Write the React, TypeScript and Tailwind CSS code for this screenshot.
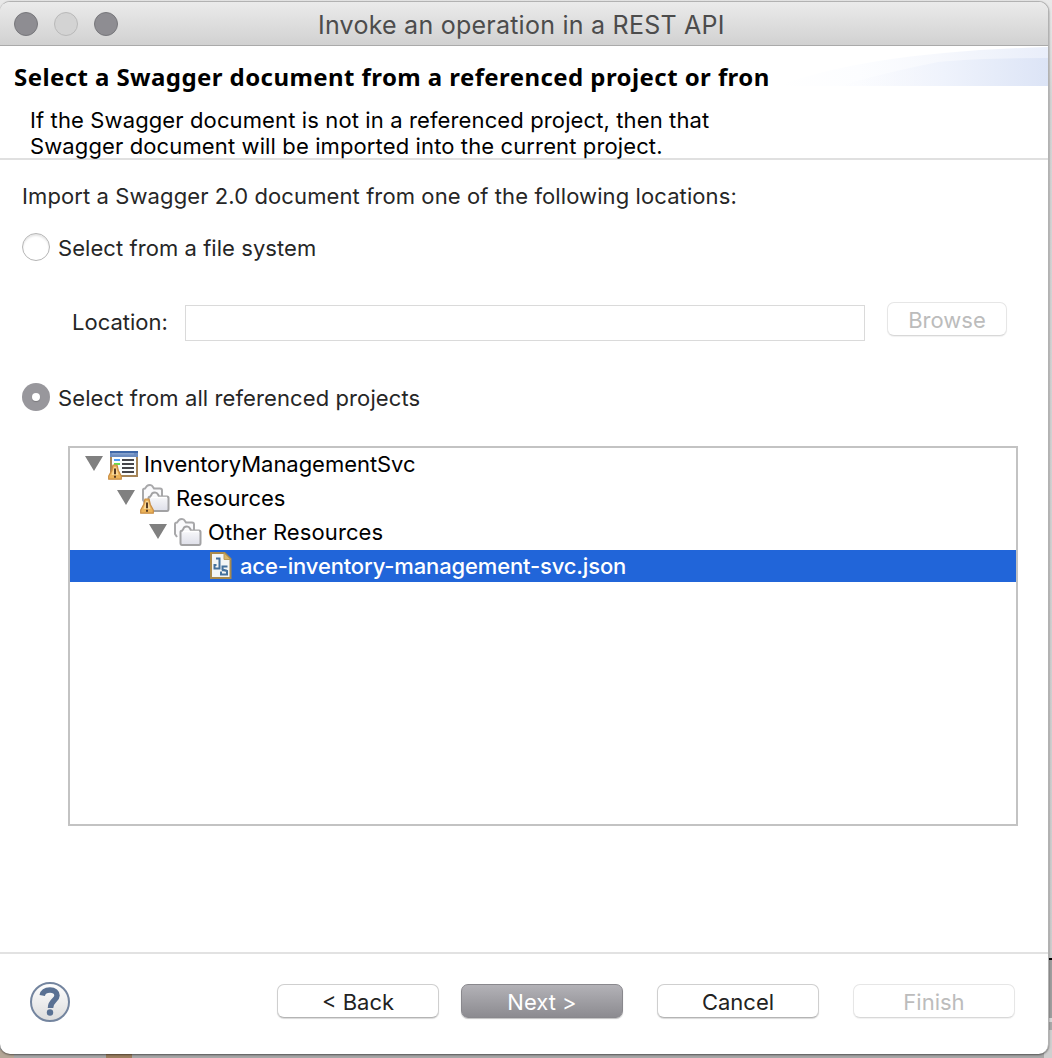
import type { ReactNode } from "react";

function Warning({ className }: { className: string }) {
  return (
    <svg className={className} viewBox="0 0 14 16" width="14" height="16">
      <path d="M5 1 H9 L10.300 6.500 L13.300 12 V15.200 H0.700 V12 L3.700 6.500 Z" fill="#ecb45a" stroke="#c98d43" strokeWidth="1.2" strokeLinejoin="round" />
      <path d="M3.500 11 L6 3 H8 L10.500 11 Z" fill="#f8d795" />
      <path d="M6 4.500 H8 V10.300 H6 Z M6 11.700 H8 V13.700 H6 Z" fill="#553a22" />
    </svg>
  );
}

function ProjectIcon() {
  return (
    <span className="relative block h-8 w-8">
      <svg width="32" height="32" viewBox="0 0 32 32">
        <rect x="3" y="3" width="26" height="24" fill="#fff" stroke="#a58457" strokeWidth="2" />
        <rect x="2" y="2" width="28" height="6" fill="#6c8cbf" />
        <rect x="2" y="2" width="28" height="2" fill="#3f68a8" />
        <rect x="4" y="4" width="22" height="1.500" fill="#86a2cd" />
        <rect x="4" y="8" width="24" height="18" fill="#fbfdfe" />
        <path d="M6 11 H12" stroke="#4b9cf5" strokeWidth="2" />
        <path d="M6 15 H12" stroke="#62e04f" strokeWidth="2" />
        <path d="M14 11 H26 M14 15 H26 M14 19 H26 M14 23 H26" stroke="#45454a" strokeWidth="2" />
      </svg>
      <Warning className="absolute left-0 top-[15px]" />
    </span>
  );
}

function FoldersIcon({ warning = false }: { warning?: boolean }) {
  return (
    <span className="relative block h-8 w-8">
      <svg width="32" height="32" viewBox="0 0 32 32">
        <defs>
          <linearGradient id="folder" x1="0" y1="0" x2="0" y2="1">
            <stop offset="0" stopColor="#ffffff" />
            <stop offset="1" stopColor="#dedfe9" />
          </linearGradient>
        </defs>
        <path d="M5 20 L3 17 V7 Q3 5.500 5 5.500 L7 3 Q8 2 10 2 Q12 2 13 4 L14 5.500 H20 Q22 5.500 22 7.500 V13" fill="#fafafc" stroke="#a8a8aa" strokeWidth="2" />
        <path d="M8.500 26 V15 Q8.500 13.500 10.500 13.500 L12 10.500 Q13 9.500 15 9.500 Q17 9.500 18 11.500 L19 13.500 H27 Q28.500 13.500 28.500 15 V26 Q28.500 28 27 28 H10 Q8.500 28 8.500 26 Z" fill="url(#folder)" stroke="#a2a2a4" strokeWidth="2" />
        <path d="M11 14.500 H27" stroke="#fff" strokeWidth="1.500" />
      </svg>
      {warning && <Warning className="absolute left-0 top-[15px]" />}
    </span>
  );
}

function JsonFileIcon() {
  return (
    <svg className="-mt-[2px]" width="24" height="30" viewBox="0 0 24 30">
      <path d="M2 3 H15.500 L21.500 9 V28 H2 Z" fill="#f3f6f6" stroke="#a98a4c" strokeWidth="2" />
      <path d="M15 3 V9.500 H21.500 Z" fill="#d9b768" stroke="#b99a58" strokeWidth="1" />
      <path d="M7 8.500 H10.500 V18.500 H5.500 V15 H7.500" fill="none" stroke="#44719c" strokeWidth="2" />
      <path d="M18.500 16.500 H13.500 V19.500 L18 21 V24.500 H12 V21.500" fill="none" stroke="#44719c" strokeWidth="2" />
      <path d="M13 20.500 H18" stroke="#44719c" strokeWidth="1.500" />
    </svg>
  );
}

function HelpIcon() {
  return (
    <svg width="42" height="42" viewBox="0 0 42 42">
      <defs>
        <linearGradient id="help" x1="0" y1="0" x2="0" y2="1">
          <stop offset="0" stopColor="#fff" />
          <stop offset="1" stopColor="#dcdcdc" />
        </linearGradient>
      </defs>
      <circle cx="21" cy="21" r="19" fill="url(#help)" stroke="#74859f" strokeWidth="2" />
      <path d="M13.200 14.500 C14 10.500 17 9 21 9 C25.500 9 28 11.500 28 14.500 C28 19.500 21.500 19.500 21.500 27" fill="none" stroke="#5a7193" strokeWidth="5.500" />
      <circle cx="21" cy="31.500" r="3.200" fill="#5a7193" />
    </svg>
  );
}

function HeaderSwoosh() {
  return (
    <svg className="absolute right-0 top-0" width="290" height="40" viewBox="0 0 290 40">
      <defs>
        <linearGradient id="outer" x1="0" y1="0" x2="1" y2="0">
          <stop offset="0" stopColor="#fff" />
          <stop offset=".3" stopColor="#fcfdff" />
          <stop offset=".6" stopColor="#f6f8fd" />
          <stop offset="1" stopColor="#e9eefa" />
        </linearGradient>
        <linearGradient id="inner" x1="0" y1="0" x2="1" y2="0">
          <stop offset="0" stopColor="#f8f9fe" stopOpacity="0" />
          <stop offset=".5" stopColor="#eff3fc" />
          <stop offset="1" stopColor="#dce4f6" />
        </linearGradient>
      </defs>
      <path d="M20 40 Q110 6 290 1 V40 Z" fill="url(#outer)" />
      <path d="M80 40 Q130 26 180 16 Q220 12 290 12 V40 Z" fill="url(#inner)" />
    </svg>
  );
}

function Disclosure() {
  return (
    <svg width="18" height="15" viewBox="0 0 18 15">
      <path d="M0 0 H18 L9 15 Z" fill="#808080" />
    </svg>
  );
}

const BUTTON = "flex h-[34px] items-center justify-center rounded-[7px] pt-[1px] text-[22px] leading-none";
const ENABLED = "border border-[#cfcfcf] border-b-[#b4b4b4] bg-white text-[#222] shadow-[0_1px_1px_rgba(0,0,0,0.15)]";
const DISABLED = "border border-[#e6e6e6] border-b-[#d8d8d8] bg-white text-[#bcbcbc] shadow-[0_1px_1px_rgba(0,0,0,0.06)]";

function TreeRow({ indent, icon, label, arrow = true, selected = false, text }: {
  indent: string; icon: ReactNode; label: string; arrow?: boolean; selected?: boolean; text: string;
}) {
  return (
    <div className={`flex items-center ${indent} ${selected ? "h-8 bg-[#2165d9] font-medium text-white" : "h-[34px] text-black"}`}>
      {arrow && <span className="mb-[3px] mr-[5px] block w-[18px]"><Disclosure /></span>}
      {icon}
      <span className={`whitespace-nowrap ${selected ? "" : "pb-[2px]"} ${text}`}>{label}</span>
    </div>
  );
}

export default function App() {
  return (
    <div className="relative flex h-[1058px] w-[1052px] flex-col overflow-hidden bg-[linear-gradient(#e9e9e9,#d4d4d4_100px,#cccccc_956px,#a8a8a8_1050px)] font-['Inter','Liberation_Sans',sans-serif] text-[22px] leading-[26px] text-[#262626]">
      <div className="absolute right-0 top-[958px] h-[100px] w-2 border-t-2 border-black bg-[linear-gradient(#9e9e9e_58px,#d8d8d8_58px,#d8d8d8_62px,#a9a9a9_62px,#a9a9a9_70px,#cfcfcf_70px)]" />
      <div className="absolute bottom-0 left-0 h-2 w-[14px] bg-[#b5a797]" />
      <div className="absolute bottom-0 left-[106px] h-1 w-[26px] bg-[#9c7f60]" />
      <div className="relative mt-px flex h-[1053px] w-[1049px] shrink-0 flex-col overflow-hidden rounded-[10px] border-r border-t border-[#b2b2b2] bg-white shadow-[0_1px_2px_rgba(0,0,0,0.5)]">
        <header className="relative flex h-11 shrink-0 items-center border-b border-[#aaa] bg-gradient-to-b from-[#ebebeb] to-[#d1d1d1]">
          <div className="ml-[14px] flex gap-4">
            <span className="size-6 rounded-full border border-[#77777b] bg-[#8e8d92]" />
            <span className="size-6 rounded-full border border-[#b9b9b9] bg-[#d3d3d3]" />
            <span className="size-6 rounded-full border border-[#77777b] bg-[#8e8d92]" />
          </div>
          <h1 className="ml-[200px] mt-[2px] whitespace-nowrap text-[25px] tracking-[0.24px] text-[#4c4c4c]">Invoke an operation in a REST API</h1>
        </header>

        <section className="relative h-[114px] shrink-0 border-b-2 border-[#e0e0e0]">
          <HeaderSwoosh />
          <h2 className="relative ml-[14px] whitespace-nowrap pt-[15px] font-['Noto_Sans','Open_Sans',sans-serif] text-[24px] font-bold leading-[32px] tracking-[0.42px] text-black">Select a Swagger document from a referenced project or fron</h2>
          <p className="ml-[30px] mt-[14px] whitespace-nowrap text-black">
            <span className="block tracking-[0.12px]">If the Swagger document is not in a referenced project, then that</span>
            <span className="block tracking-[0.12px]">Swagger document will be imported into the current project.</span>
          </p>
        </section>

        <main className="flex h-[792px] shrink-0 flex-col">
          <p className="ml-[22px] mt-[23px] whitespace-nowrap tracking-[0.1px]">Import a Swagger 2.0 document from one of the following locations:</p>
          <label className="ml-[22px] mt-6 flex h-7 items-center">
            <span className="size-7 rounded-full border border-[#b5b5b5] bg-white shadow-[inset_0_2px_2px_rgba(0,0,0,0.1)]" />
            <span className="ml-2 mt-[2px] tracking-[0.06px]">Select from a file system</span>
          </label>
          <div className="mt-[41px] flex h-[38px] items-start">
            <span className="ml-[72px] mt-[7px] w-[113px]">Location:</span>
            <span className="mt-[3px] h-9 w-[680px] border border-[#dadada]" />
            <span className={`ml-[22px] w-[120px] ${BUTTON} ${DISABLED}`}>Browse</span>
          </div>
          <label className="ml-[22px] mt-[43px] flex h-7 items-center">
            <span className="flex size-7 items-center justify-center rounded-full bg-[#98979c]">
              <span className="size-2 rounded-full bg-white shadow-[0_1px_1px_rgba(0,0,0,0.2)]" />
            </span>
            <span className="ml-2 mt-[2px] tracking-[0.1px]">Select from all referenced projects</span>
          </label>
          <div className="ml-[68px] mt-[35px] h-[380px] w-[950px] border-2 border-[#c3c3c3]">
            <TreeRow indent="pl-[15px]" icon={<ProjectIcon />} label="InventoryManagementSvc" text="ml-1 tracking-[-0.04px]" />
            <TreeRow indent="pl-[47px]" icon={<FoldersIcon warning />} label="Resources" text="ml-1" />
            <TreeRow indent="pl-[79px]" icon={<FoldersIcon />} label="Other Resources" text="ml-1 tracking-[0.1px]" />
            <TreeRow indent="pl-[139px]" icon={<JsonFileIcon />} label="ace-inventory-management-svc.json" arrow={false} selected text="ml-[7px] tracking-[-0.15px]" />
          </div>
        </main>

        <footer className="flex h-[102px] shrink-0 items-start border-t-2 border-[#e2e2e2]">
          <span className="ml-[29px] mt-[27px]"><HelpIcon /></span>
          <div className="ml-[206px] mt-[30px] flex">
            <span className={`w-[162px] ${BUTTON} ${ENABLED}`}>&lt; Back</span>
            <span className={`ml-[22px] w-[162px] border border-[#89888d] bg-gradient-to-b from-[#b3b2b7] to-[#8c8b90] text-white shadow-[0_1px_1px_rgba(0,0,0,0.25)] ${BUTTON}`}>Next &gt;</span>
            <span className={`ml-[34px] w-[162px] ${BUTTON} ${ENABLED}`}>Cancel</span>
            <span className={`ml-[34px] w-[162px] ${BUTTON} ${DISABLED}`}>Finish</span>
          </div>
        </footer>
      </div>
    </div>
  );
}
